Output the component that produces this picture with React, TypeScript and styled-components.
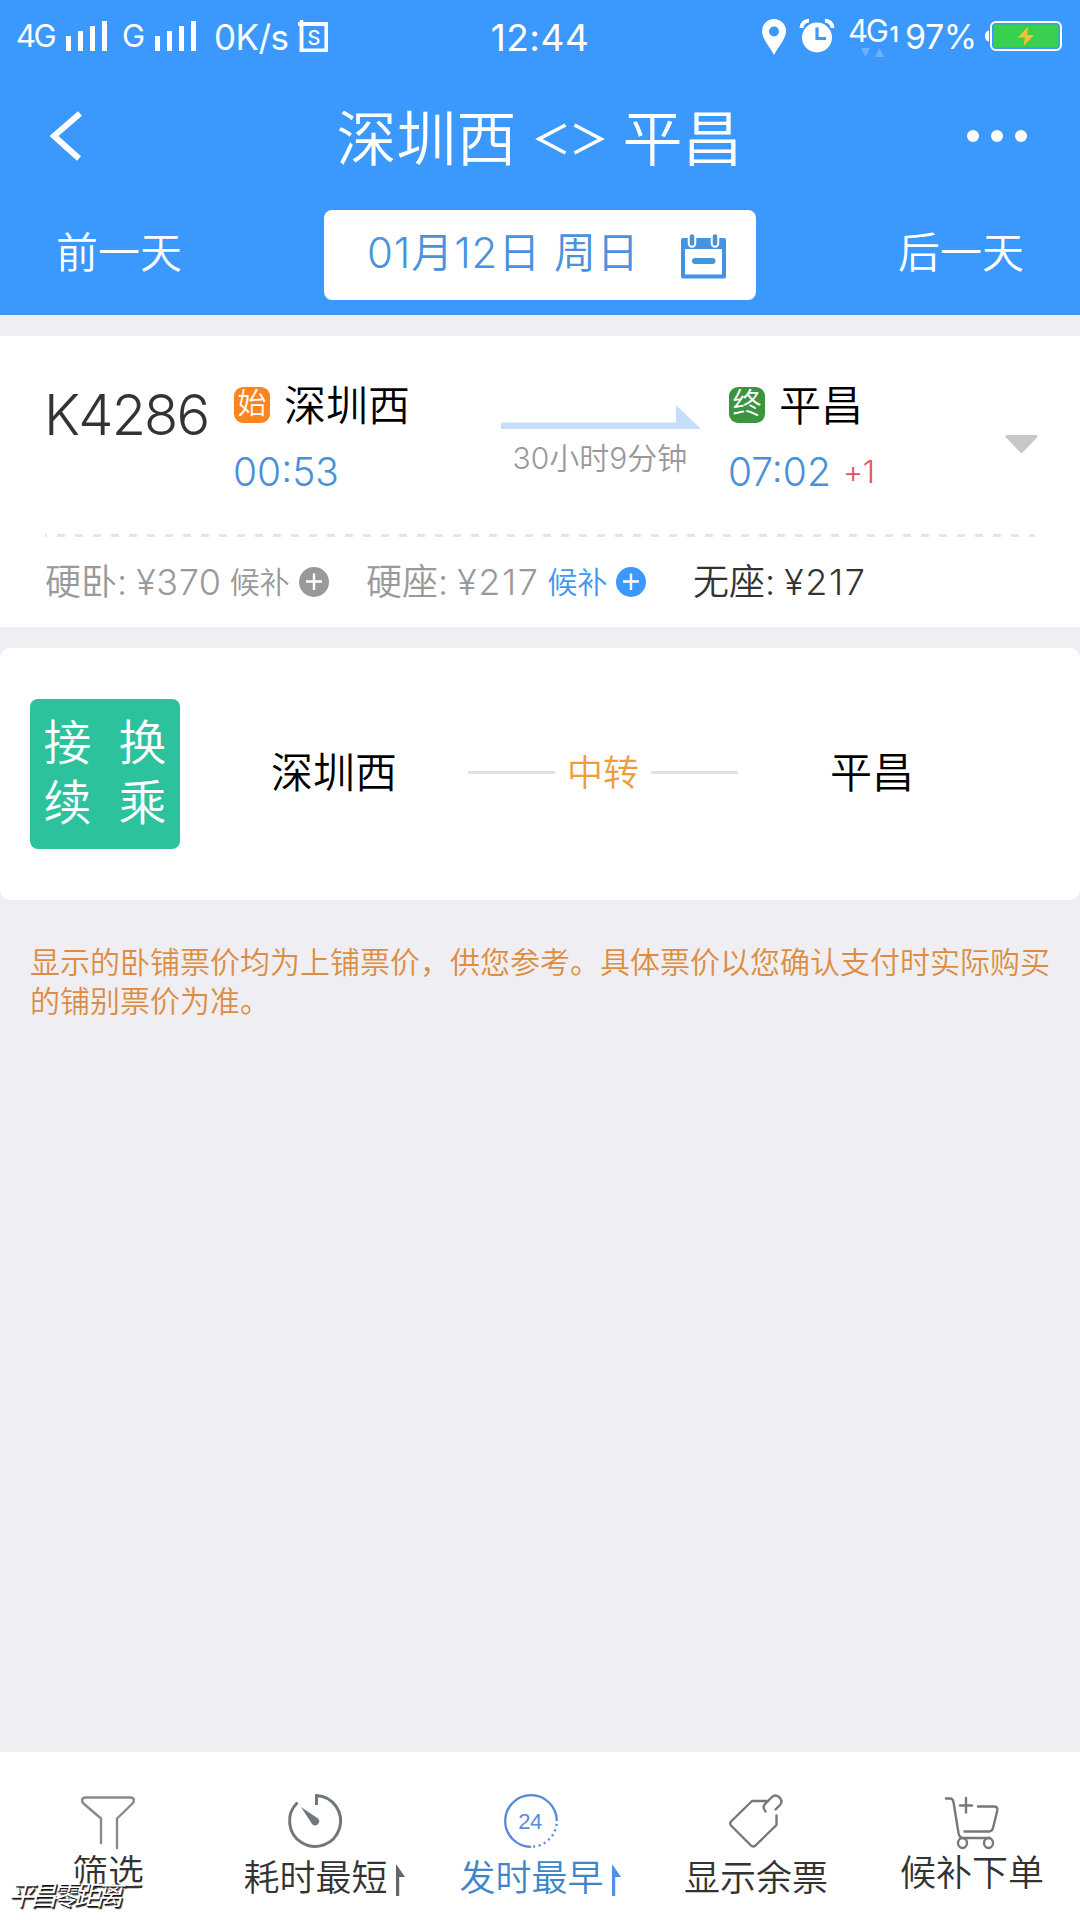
import React from 'react';
import styled, { createGlobalStyle } from 'styled-components';

const Global = createGlobalStyle`
  * { box-sizing: border-box; }
  body {
    margin: 0;
    background: #efeef3;
    font-family: Inter, "Noto Sans CJK SC", sans-serif;
    font-weight: 350;
  }
`;

const Screen = styled.div`
  width: 1080px;
  height: 1920px;
  display: flex;
  flex-direction: column;
  overflow: hidden;
  background: #efeef3;
`;

const Header = styled.header`
  height: 315px;
  background: #3b98fc;
  color: #fff;
  display: flex;
  flex-direction: column;
`;

const StatusBar = styled.div`
  height: 74px;
  padding: 0 18px 0 16px;
  display: grid;
  grid-template-columns: 1fr auto 1fr;
  align-items: center;
  font-weight: 400;
`;

const StatusGroup = styled.div<{ $end?: boolean }>`
  display: flex;
  align-items: center;
  justify-content: ${p => (p.$end ? 'flex-end' : 'flex-start')};
`;

const StatusText = styled.span<{ $size: number; $w: number; $ml?: number; $ls?: number; $up?: number }>`
  width: ${p => p.$w}px;
  margin-left: ${p => p.$ml ?? 0}px;
  margin-bottom: ${p => p.$up ?? 0}px;
  font-size: ${p => p.$size}px;
  line-height: 40px;
  letter-spacing: ${p => p.$ls ?? 0}px;
  white-space: nowrap;
`;

const Bars = styled.span<{ $ml: number }>`
  display: flex;
  align-items: flex-end;
  gap: 7px;
  height: 30px;
  margin-left: ${p => p.$ml}px;
  margin-bottom: 2px;
`;

const Bar = styled.i<{ $h: number }>`
  width: 5px;
  height: ${p => p.$h}px;
  background: #fff;
`;

const Clock = styled.span`
  padding: 1px 0 0 2px;
  font-size: 37px;
  line-height: 40px;
  letter-spacing: 0.5px;
`;

const Glyph = styled.svg<{ $ml?: number; $mt?: number }>`
  display: block;
  flex: none;
  margin-left: ${p => p.$ml ?? 0}px;
  margin-top: ${p => p.$mt ?? 0}px;
  overflow: visible;
`;

const NetworkType = styled.span`
  width: 56px;
  height: 38px;
  margin-left: 14px;
  display: flex;
  flex-direction: column;
  font-size: 31px;
  line-height: 25px;
  letter-spacing: -2.2px;
  white-space: nowrap;
  small { font-size: 21px; font-weight: 600; margin-left: 3px; }
`;

const TitleBar = styled.div`
  height: 126px;
  padding: 0 53px 0 48px;
  display: grid;
  grid-template-columns: 1fr auto 1fr;
  align-items: center;
`;

const Title = styled.h1`
  margin: 3px 0 0 4px;
  display: flex;
  align-items: center;
  gap: 20px;
  font-size: 60px;
  font-weight: 350;
  line-height: 80px;
`;

const Dots = styled.div`
  margin-top: -2px;
  display: flex;
  gap: 12px;
  justify-content: flex-end;
  i { width: 12px; height: 12px; border-radius: 50%; background: #fff; }
`;

const DateBar = styled.div`
  padding: 10px 56px 0 56px;
  display: flex;
  justify-content: space-between;
  align-items: center;
  font-size: 42px;
`;

const DayLink = styled.span`
  line-height: 60px;
  margin-top: -4px;
`;

const DateBox = styled.div`
  width: 432px;
  height: 90px;
  padding: 0 30px 0 43px;
  border-radius: 8px;
  background: #fff;
  color: #4a93dc;
  display: flex;
  align-items: center;
  justify-content: space-between;
  font-size: 42px;
  letter-spacing: 0.9px;
`;

const DateText = styled.span`
  line-height: 60px;
  margin-top: -4px;
  white-space: nowrap;
`;

const TrainCard = styled.section`
  height: 291px;
  margin-top: 21px;
  padding: 0 42px 0 45px;
  background: #fff;
  display: flex;
  flex-direction: column;
`;

const TrainTop = styled.div`
  height: 198px;
  padding-top: 42px;
  display: grid;
  grid-template-columns: 189px 267px 200px 1fr 33px;
  align-items: start;
`;

const TrainNo = styled.div`
  margin-left: -1px;
  font-size: 56px;
  line-height: 74px;
  letter-spacing: -1.9px;
  color: #333;
`;

const Stop = styled.div<{ $ml?: number }>`
  margin-left: ${p => p.$ml ?? 0}px;
`;

const StationLine = styled.div`
  height: 56px;
  display: flex;
  align-items: center;
  gap: 14px;
  color: #000;
  font-size: 42px;
  line-height: 56px;
`;

const Badge = styled.span<{ $bg: string }>`
  width: 36px;
  height: 36px;
  margin-bottom: 2px;
  border-radius: 9px;
  background: ${p => p.$bg};
  color: #fff;
  font-size: 29px;
  line-height: 34px;
  text-align: center;
`;

const Time = styled.div`
  height: 56px;
  margin: 9px 0 0 -1px;
  display: flex;
  align-items: center;
  color: #4a90d9;
  font-size: 39px;
  line-height: 55px;
  white-space: nowrap;
`;

const NextDay = styled.span`
  margin-left: 12px;
  color: #e0545f;
  font-size: 31px;
  letter-spacing: -0.3px;
`;

const Journey = styled.div`
  padding-top: 27px;
  display: flex;
  flex-direction: column;
  align-items: center;
  color: #999;
  font-size: 30px;
  line-height: 40px;
  gap: 9px;
  white-space: nowrap;
  span { margin-left: -2px; }
`;

const DashRule = styled.div`
  height: 3px;
  width: 990px;
  background: repeating-linear-gradient(90deg, #e5e5e5 0 2px, transparent 2px 12px, #e5e5e5 12px 18px);
`;

const Fares = styled.div`
  height: 90px;
  display: flex;
  align-items: center;
`;

const Fare = styled.div<{ $tone: string; $w: number }>`
  width: ${p => p.$w}px;
  display: flex;
  align-items: center;
  color: ${p => p.$tone};
  font-size: 36px;
  line-height: 50px;
  white-space: nowrap;
`;

const Price = styled.span<{ $ls: number }>`
  margin-left: 9px;
  letter-spacing: ${p => p.$ls}px;
`;

const Waitlist = styled.span<{ $tone: string }>`
  margin-left: 8px;
  display: flex;
  align-items: center;
  gap: 9px;
  color: ${p => p.$tone};
  font-size: 30px;
`;

const TransferCard = styled.section`
  height: 252px;
  margin-top: 21px;
  padding: 0 0 0 30px;
  border-radius: 10px;
  background: #fff;
  display: flex;
  align-items: center;
`;

const TransferBadge = styled.div`
  width: 150px;
  height: 150px;
  padding: 14px 0 0 0;
  border-radius: 8px;
  background: #2dc29e;
  color: #fff;
  display: grid;
  grid-template-columns: 75px 75px;
  grid-auto-rows: 60px;
  font-size: 48px;
  line-height: 60px;
  text-align: center;
`;

const Place = styled.span<{ $ml: number }>`
  margin: -3px 0 0 ${p => p.$ml}px;
  color: #000;
  font-size: 42px;
  line-height: 56px;
`;

const Via = styled.div`
  width: 270px;
  margin: -3px 0 0 71px;
  display: flex;
  align-items: center;
  gap: 12px;
  color: #ef9c3c;
  font-size: 36px;
  line-height: 50px;
  white-space: nowrap;
  &::before, &::after { content: ''; flex: 1; height: 3px; background: #e2e2e2; }
`;

const Notice = styled.p`
  margin: 0;
  padding: 43px 30px 0;
  flex: 1;
  color: #dd8d42;
  font-size: 30px;
  line-height: 39px;
`;

const TabBar = styled.nav`
  height: 168px;
  background: #fff;
  display: grid;
  grid-template-columns: repeat(5, 216px);
  justify-items: center;
`;

const Tab = styled.div<{ $active?: boolean }>`
  padding-top: 42px;
  display: flex;
  align-items: flex-start;
  gap: 8px;
  color: ${p => (p.$active ? '#3f86c8' : '#333')};
`;

const TabMain = styled.div<{ $gap: number }>`
  display: flex;
  flex-direction: column;
  align-items: center;
  gap: ${p => p.$gap}px;
  font-size: 36px;
  line-height: 50px;
`;

const Watermark = styled.div`
  position: absolute;
  left: 10px;
  top: 1878px;
  color: #fff;
  font-size: 27px;
  font-weight: 400;
  line-height: 36px;
  letter-spacing: -5px;
  transform: skewX(-14deg);
  text-shadow: 1px 1px 0 #111, 2px 2px 1px #333;
  white-space: nowrap;
`;

const Signal = ({ ml }: { ml: number }) => (
  <Bars $ml={ml}>{[15, 20, 25, 30].map(h => <Bar key={h} $h={h} />)}</Bars>
);

const PlusIcon = ({ color }: { color: string }) => (
  <Glyph width="30" height="30" viewBox="0 0 30 30">
    <circle cx="15" cy="15" r="15" fill={color} />
    <path d="M15 6.5V23M7 14.5H23" stroke="#fff" strokeWidth="2.4" />
  </Glyph>
);

const SortArrow = ({ color }: { color: string }) => (
  <Glyph width="9" height="32" viewBox="0 0 9 32" $mt={70}>
    <path d="M0 0L9 13H3.2V32H0Z" fill={color} />
  </Glyph>
);

const icon = { fill: 'none', stroke: '#75797e', strokeWidth: 2.4, strokeLinecap: 'round' as const, strokeLinejoin: 'round' as const };

const FunnelIcon = () => (
  <Glyph width="54" height="54" viewBox="0 0 54 54" {...icon}>
    <path d="M20 49V24.500L2.500 9.500Q-1 4.500 4 3.500H50Q55 4.500 51.500 9.500L36 24.500V54" stroke="#86898e" />
  </Glyph>
);

const GaugeIcon = () => (
  <Glyph width="54" height="54" viewBox="0 0 54 54">
    <path d="M9.500 8.500A25.500 25.500 0 1 0 28.500 1.500V11" fill="none" stroke="#70777c" strokeWidth="3" />
    <path d="M13 13L30 24.500A4 4 0 1 1 24 30Z" fill="#70777c" />
  </Glyph>
);

const DayIcon = () => (
  <Glyph width="54" height="54" viewBox="0 0 54 54">
    <path d="M27 52.800A25.800 25.800 0 1 1 52.800 27" fill="none" stroke="#5488d8" strokeWidth="2.300" />
    <path d="M52.800 27A25.800 25.800 0 0 1 27 52.800" fill="none" stroke="#5488d8" strokeWidth="2.300" strokeDasharray="2 3.500" strokeDashoffset="-3" />
    <text x="26" y="35" textAnchor="middle" fontSize="22" fontWeight="300" fontFamily="Liberation Sans" letterSpacing="-0.5" fill="#5c8cd4">24</text>
  </Glyph>
);

const TagIcon = () => (
  <Glyph width="54" height="54" viewBox="0 0 54 54" {...icon}>
    <path d="M39 7H23L2 27.500Q0.500 29.500 2 31.500L22 51.500Q24 53.500 26.500 51.500L47.500 31V21.500" />
    <path d="M36.500 17.500Q32.500 12.500 37 9L42.500 3.500Q46 0 50 3Q54.500 7 51 11L46.500 15.500" />
  </Glyph>
);

const CartIcon = () => (
  <Glyph width="54" height="54" viewBox="0 0 54 54" {...icon}>
    <path d="M1 4.500H5Q8 4.500 8.500 8L13.500 39Q14.500 44 18 44H45" />
    <path d="M33 12.500H49Q53 12.500 52.300 16.500L48 34Q47 37.500 44 37.500H19.500M21 4V18.500M15 11.500H27" />
    <ellipse cx="17.500" cy="49" rx="4.500" ry="5" />
    <ellipse cx="43.500" cy="49" rx="4.500" ry="5" />
  </Glyph>
);

export default function App() {
  return (
    <Screen>
      <Global />
      <Header>
        <StatusBar>
          <StatusGroup>
            <StatusText $size={31} $w={39} $ls={-2.5} $up={3}>4G</StatusText>
            <Signal ml={11} />
            <StatusText $size={31} $w={20} $ml={15} $up={3}>G</StatusText>
            <Signal ml={13} />
            <StatusText $size={35} $w={74} $ml={18} $ls={-0.6}>0K/s</StatusText>
            <Glyph width="30" height="32" viewBox="0 0 30 32" $ml={10} $mt={-2}>
              <path d="M0 4H30M3.500 0V32" stroke="#fff" strokeWidth="3.500" />
              <path d="M3.500 4H28.200V30.200H3.500Z" fill="none" stroke="#fff" strokeWidth="3.500" />
              <text x="16" y="24.500" textAnchor="middle" fontSize="20" fontWeight="500" fontFamily="Inter" fill="#fff">S</text>
            </Glyph>
          </StatusGroup>
          <Clock>12:44</Clock>
          <StatusGroup $end>
            <Glyph width="24" height="36" viewBox="0 0 24 36">
              <path fillRule="evenodd" fill="#fff" d="M12 0A12 12 0 0 1 24 12C24 20 16 28 12 36C8 28 0 20 0 12A12 12 0 0 1 12 0ZM12 7.500A5 5 0 1 0 12 17.500A5 5 0 1 0 12 7.500Z" />
            </Glyph>
            <Glyph width="34" height="34" viewBox="0 0 34 34" $ml={14} $mt={-2}>
              <path d="M1.500 9A7 7 0 0 1 9 1.800M25 1.800A7 7 0 0 1 32.500 9" fill="none" stroke="#fff" strokeWidth="4" />
              <circle cx="17" cy="18.500" r="15" fill="#fff" />
              <path d="M17 8.500V19.500H26" fill="none" stroke="#3b98fc" strokeWidth="3.200" />
            </Glyph>
            <NetworkType>
              <span>4G<small>1</small></span>
              <Glyph width="22" height="10" viewBox="0 0 22 10" $ml={13} $mt={1}>
                <path d="M0 0H9L4.500 9ZM14 9H23L18.500 0Z" fill="#6cb3ff" />
              </Glyph>
            </NetworkType>
            <StatusText $size={34} $w={73} $ml={1} $ls={-0.5}>97%</StatusText>
            <Glyph width="77" height="30" viewBox="0 0 77 30" $ml={7} $mt={-2}>
              <path d="M4 9.500Q0 10 0 15Q0 20 4 20.500Z" fill="#fff" />
              <rect x="6" y="1" width="70" height="28" rx="5" fill="#3b98fc" stroke="#fff" strokeWidth="2" />
              <rect x="8.500" y="3.500" width="65" height="23" rx="2" fill="#38d04c" />
              <path d="M43 5.500L33 16.500H40L38.500 25L49 14H42Z" fill="#fbc02d" />
            </Glyph>
          </StatusGroup>
        </StatusBar>
        <TitleBar>
          <Glyph width="34" height="48" viewBox="0 0 34 48" $mt={-3}>
            <path d="M32 1.500L6 24L31 46.500" fill="none" stroke="#fff" strokeWidth="6" />
          </Glyph>
          <Title>
            <span>深圳西</span>
            <Glyph width="66" height="32" viewBox="0 0 66 32">
              <path d="M28.500 2L2 16L28.500 30M37.500 2L64 16L37.500 30" fill="none" stroke="#fff" strokeWidth="3.600" />
            </Glyph>
            <span>平昌</span>
          </Title>
          <Dots><i /><i /><i /></Dots>
        </TitleBar>
        <DateBar>
          <DayLink>前一天</DayLink>
          <DateBox>
            <DateText>01月12日 周日</DateText>
            <Glyph width="45" height="46" viewBox="0 0 45 46" $mt={4}>
              <path d="M2 15V42.500H43V15" fill="none" stroke="#4593e0" strokeWidth="4" strokeLinejoin="round" />
              <path d="M0 6Q0 4 2 4H43Q45 4 45 6V15H0Z" fill="#4593e0" />
              <path d="M11 3V9.500M34 3V9.500" stroke="#fff" strokeWidth="8.500" strokeLinecap="round" />
              <path d="M11 2.500V9.500M34 2.500V9.500" stroke="#4593e0" strokeWidth="4.500" strokeLinecap="round" />
              <path d="M14 27H31.500" stroke="#4593e0" strokeWidth="6" strokeLinecap="round" />
            </Glyph>
          </DateBox>
          <DayLink>后一天</DayLink>
        </DateBar>
      </Header>

      <TrainCard>
        <TrainTop>
          <TrainNo>K4286</TrainNo>
          <Stop>
            <StationLine><Badge $bg="#fb8420">始</Badge>深圳西</StationLine>
            <Time>00:53</Time>
          </Stop>
          <Journey>
            <Glyph width="200" height="24" viewBox="0 0 200 24">
              <path d="M0 17.500H175V0L200 24H0Z" fill="#c5dffb" />
            </Glyph>
            <span>30小时9分钟</span>
          </Journey>
          <Stop $ml={28}>
            <StationLine><Badge $bg="#3a9440">终</Badge>平昌</StationLine>
            <Time>07:02<NextDay>+1</NextDay></Time>
          </Stop>
          <Glyph width="33" height="19" viewBox="0 0 33 19" $mt={57}>
            <path d="M2 1.500H31L16.500 16.500Z" fill="#c8c8c8" stroke="#c8c8c8" strokeWidth="3" strokeLinejoin="round" />
          </Glyph>
        </TrainTop>
        <DashRule />
        <Fares>
          <Fare $tone="#999" $w={321}>硬卧:<Price $ls={0.6}>¥370</Price><Waitlist $tone="#999">候补<PlusIcon color="#999" /></Waitlist></Fare>
          <Fare $tone="#999" $w={327}>硬座:<Price $ls={1.6}>¥217</Price><Waitlist $tone="#3f97f0">候补<PlusIcon color="#3b98fc" /></Waitlist></Fare>
          <Fare $tone="#333" $w={180}>无座:<Price $ls={1.6}>¥217</Price></Fare>
        </Fares>
      </TrainCard>

      <TransferCard>
        <TransferBadge><span>接</span><span>换</span><span>续</span><span>乘</span></TransferBadge>
        <Place $ml={91}>深圳西</Place>
        <Via>中转</Via>
        <Place $ml={92}>平昌</Place>
      </TransferCard>

      <Notice>显示的卧铺票价均为上铺票价，供您参考。具体票价以您确认支付时实际购买的铺别票价为准。</Notice>

      <TabBar>
        <Tab><TabMain $gap={-1}><FunnelIcon /><span>筛选</span></TabMain></Tab>
        <Tab><TabMain $gap={5}><GaugeIcon /><span>耗时最短</span></TabMain><SortArrow color="#666" /></Tab>
        <Tab $active><TabMain $gap={5}><DayIcon /><span>发时最早</span></TabMain><SortArrow color="#5090ea" /></Tab>
        <Tab><TabMain $gap={5}><TagIcon /><span>显示余票</span></TabMain></Tab>
        <Tab><TabMain $gap={-1}><CartIcon /><span>候补下单</span></TabMain></Tab>
      </TabBar>
      <Watermark>平昌零距离</Watermark>
    </Screen>
  );
}
